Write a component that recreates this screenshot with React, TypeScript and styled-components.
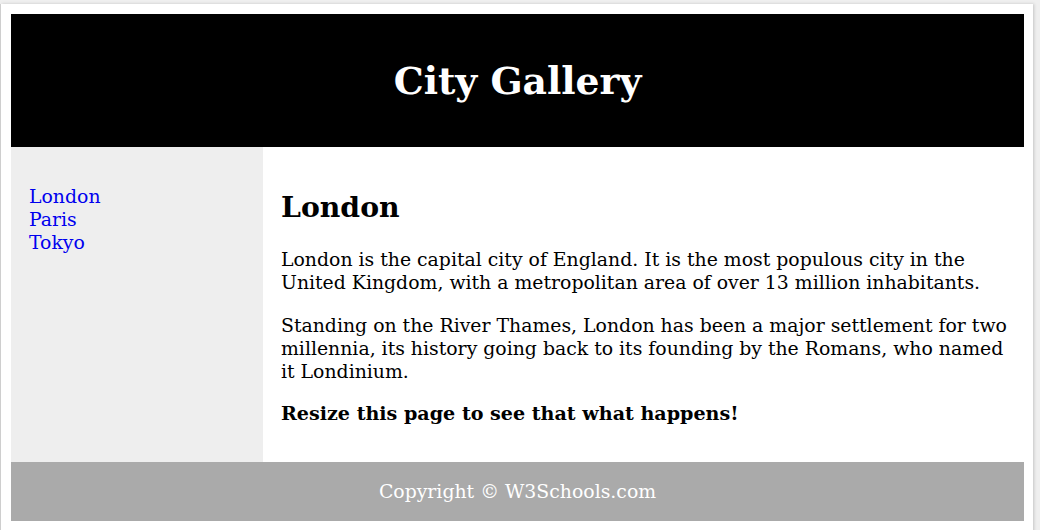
import React from "react";
import styled, { createGlobalStyle } from "styled-components";

const Global = createGlobalStyle`
  html, body { margin: 0; padding: 0; }
  body {
    background: #efefef;
    font-family: "DejaVu Serif", serif;
    font-size: 18.85px;
    line-height: 23.04px;
    overflow: hidden;
  }
  * { box-sizing: border-box; }
`;

const Frame = styled.div`
  margin: 4px 0 0 1px;
  width: 1032px;
  height: 540px;
  background: #fff;
  padding: 10px 9px 10px 10px;
  box-shadow: 1px 0 3px rgba(0, 0, 0, 0.18), -1px 0 0 #d4d4d4;
`;

const Container = styled.div`
  display: flex;
  flex-flow: row wrap;
  text-align: center;
`;

const Header = styled.header`
  flex: 1 100%;
  background: #000;
  color: #fff;
  padding: 18px;
`;

const Title = styled.h1`
  margin: 25.7px 0;
  font-size: 37.7px;
  font-weight: bold;
  line-height: 46.08px;
`;

const Nav = styled.nav`
  width: 252px;
  background: #eee;
  padding: 18px;
  text-align: left;
`;

const NavList = styled.ul`
  list-style: none;
  margin: 19.2px 0;
  padding: 0;
`;

const NavLink = styled.a`
  color: #0000ee;
  text-decoration: none;
`;

const Article = styled.article`
  flex: 1;
  padding: 18px 15px 18px 18px;
  text-align: left;
`;

const Heading = styled.h2`
  font-size: 28.3px;
  margin: 24.4px 0 23.9px;
  line-height: 34.56px;
`;

const Para = styled.p`
  margin: 19.2px 0;
`;

const Emphasis = styled.strong`
  font-size: 19.1px;
`;

const Footer = styled.footer`
  flex: 1 100%;
  background: #aaa;
  color: #fff;
  padding: 18px;
`;

export default function App() {
  return (
    <>
      <Global />
      <Frame>
        <Container>
          <Header>
            <Title>City Gallery</Title>
          </Header>
          <Nav>
            <NavList>
              <li><NavLink href="#">London</NavLink></li>
              <li><NavLink href="#">Paris</NavLink></li>
              <li><NavLink href="#">Tokyo</NavLink></li>
            </NavList>
          </Nav>
          <Article>
            <Heading>London</Heading>
            <Para>
              London is the capital city of England. It is the most populous city in the United Kingdom, with a metropolitan area of over 13 million inhabitants.
            </Para>
            <Para>
              Standing on the River Thames, London has been a major settlement for two millennia, its history going back to its founding by the Romans, who named it Londinium.
            </Para>
            <Para>
              <Emphasis>Resize this page to see that what happens!</Emphasis>
            </Para>
          </Article>
          <Footer>Copyright © W3Schools.com</Footer>
        </Container>
      </Frame>
    </>
  );
}
